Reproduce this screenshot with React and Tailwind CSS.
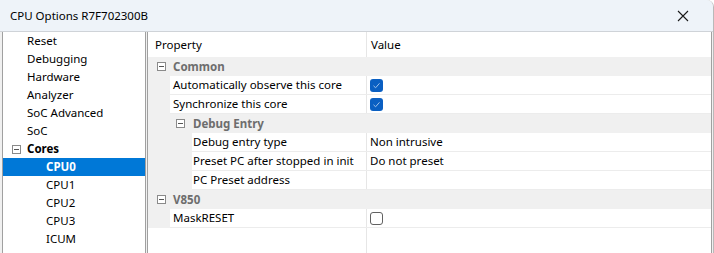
import React from "react";

const treeItems = [
  { label: "Reset", indent: 27 },
  { label: "Debugging", indent: 27 },
  { label: "Hardware", indent: 27 },
  { label: "Analyzer", indent: 27 },
  { label: "SoC Advanced", indent: 27 },
  { label: "SoC", indent: 27 },
  { label: "Cores", indent: 27, group: true },
  { label: "CPU0", indent: 46, selected: true },
  { label: "CPU1", indent: 46 },
  { label: "CPU2", indent: 46 },
  { label: "CPU3", indent: 46 },
  { label: "ICUM", indent: 46 },
];

function Expander() {
  return (
    <span className="w-[9px] h-[9px] border border-[#8a8a8a] bg-white flex items-center justify-center shrink-0">
      <span className="w-[5px] h-px bg-[#555]" />
    </span>
  );
}

function CheckBox({ checked }) {
  if (!checked) {
    return <span className="block w-[13px] h-[13px] rounded-[3px] border border-[#616161] bg-white" />;
  }
  return (
    <span className="flex w-[13px] h-[13px] rounded-[3px] bg-[#0a5fc2] items-center justify-center">
      <svg width="9" height="9" viewBox="0 0 9 9">
        <path d="M1.5 4.8 L3.6 6.8 L7.5 2.3" stroke="#9fc1ea" strokeWidth="1" fill="none" />
      </svg>
    </span>
  );
}

// category row spans full width in gray
function Category({ label }) {
  return (
    <div className="flex h-[19px] bg-[#f0f0f0] items-center">
      <div className="w-[25px] shrink-0 flex items-center pl-[9px]">
        <Expander />
      </div>
      <span className="font-bold text-[#6d6d6d]">{label}</span>
    </div>
  );
}

function PropRow({ label, value, check, level = 0 }) {
  return (
    <div className="flex h-[19px] bg-[#f0f0f0]">
      <div className={level ? "w-[44px] shrink-0" : "w-[22px] shrink-0"} />
      <div className="flex flex-1 bg-white border-b border-[#ececec]">
        <div className={level ? "w-[174px] shrink-0 pl-[1px] flex items-center" : "w-[196px] shrink-0 pl-[3px] flex items-center"}>
          {label}
        </div>
        <div className="flex-1 border-l border-[#e6e6e6] pl-[3px] flex items-center">
          {check !== undefined ? <CheckBox checked={check} /> : value}
        </div>
      </div>
    </div>
  );
}

export default function App() {
  return (
    <div
      className="w-[714px] h-[253px] bg-[#f0f0f0] flex flex-col overflow-hidden text-[11.5px] text-black border-r border-[#b9b9b9] rounded-tr-[7px]"
      style={{ fontFamily: "'Noto Sans', 'Open Sans', sans-serif" }}
    >
      {/* title bar */}
      <div className="h-[32px] shrink-0 bg-[#eef3f9] flex items-center justify-between pl-[10px] pr-[24px] border-b border-[#cfd3d8]">
        <span className="text-[11.5px]">CPU Options R7F702300B</span>
        <svg width="12" height="12" viewBox="0 0 12 12">
          <path d="M1 1 L11 11 M11 1 L1 11" stroke="#1a1a1a" strokeWidth="1.1" />
        </svg>
      </div>

      <div className="flex flex-1 pl-[2px] pr-[1px] gap-[1px] min-h-0">
        {/* tree */}
        <div className="w-[144px] shrink-0 bg-white border-l border-r border-[#a0a0a0]">
          {treeItems.map((it) => (
            <div
              key={it.label}
              className={
                it.selected
                  ? "h-[18px] flex items-center bg-[#0078d7] text-white font-bold relative"
                  : "h-[18px] flex items-center relative"
              }
              style={{ paddingLeft: it.indent - 3 }}
            >
              {it.group && (
                <span className="absolute left-[9px] top-[5px]">
                  <Expander />
                </span>
              )}
              <span className={it.group ? "font-bold" : ""}>{it.label}</span>
            </div>
          ))}
        </div>

        {/* property grid */}
        <div className="flex-1 bg-white border-l border-r border-[#a0a0a0] flex flex-col">
          <div className="h-[25px] flex shrink-0">
            <div className="w-[218px] shrink-0 pl-[7px] flex items-center">Property</div>
            <div className="flex-1 border-l border-[#e6e6e6] pl-[4px] flex items-center">Value</div>
          </div>
          <Category label="Common" />
          <PropRow label="Automatically observe this core" check={true} />
          <PropRow label="Synchronize this core" check={true} />
          <div className="flex h-[19px] bg-[#f0f0f0] items-center">
            <div className="w-[22px] shrink-0" />
            <div className="w-[23px] shrink-0 flex items-center pl-[6px]">
              <Expander />
            </div>
            <span className="font-bold text-[#6d6d6d]">Debug Entry</span>
          </div>
          <PropRow label="Debug entry type" value="Non intrusive" level={1} />
          <PropRow label="Preset PC after stopped in init" value="Do not preset" level={1} />
          <PropRow label="PC Preset address" value="" level={1} />
          <Category label="V850" />
          <PropRow label="MaskRESET" check={false} />
          <div className="flex flex-1">
            <div className="w-[218px] shrink-0" />
            <div className="flex-1 border-l border-[#e6e6e6]" />
          </div>
        </div>
      </div>
    </div>
  );
}
